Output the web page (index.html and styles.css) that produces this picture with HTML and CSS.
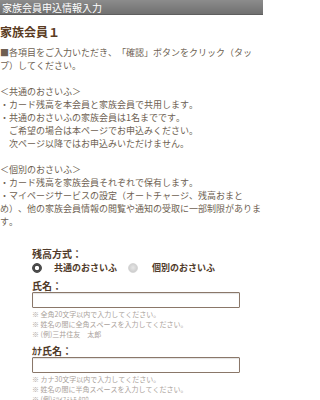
FILE: index.html
```html
<!DOCTYPE html>
<html lang="ja">
<head>
<meta charset="utf-8">
<title>家族会員申込情報入力</title>
<link rel="stylesheet" href="styles.css">
</head>
<body>
<div class="header">家族会員申込情報入力</div>
<h1 class="title">家族会員１</h1>
<p class="intro">■各項目をご入力いただき、「確認」ボタンをクリック（タップ）してください。<br><br>＜共通のおさいふ＞<br>・カード残高を本会員と家族会員で共用します。<br>・共通のおさいふの家族会員は1名までです。<br>　ご希望の場合は本ページでお申込みください。<br>　次ページ以降ではお申込みいただけません。<br><br>＜個別のおさいふ＞<br>・カード残高を家族会員それぞれで保有します。<br>・マイページサービスの設定（オートチャージ、残高おまとめ）、他の家族会員情報の閲覧や通知の受取に一部制限があります。</p>
<form class="form">
  <div class="label">残高方式：</div>
  <div class="radios">
    <label class="radio-item"><span class="radio checked"></span><span class="radio-text">共通のおさいふ</span></label>
    <label class="radio-item"><span class="radio"></span><span class="radio-text">個別のおさいふ</span></label>
  </div>
  <div class="field">
    <div class="label">氏名：</div>
    <input class="text-input" type="text">
    <ul class="notes">
      <li>※ 全角20文字以内で入力してください。</li>
      <li>※ 姓名の間に全角スペースを入力してください。</li>
      <li>※ (例)三井住友　太郎</li>
    </ul>
  </div>
  <div class="field">
    <div class="label">ｶﾅ氏名：</div>
    <input class="text-input" type="text">
    <ul class="notes">
      <li>※ カナ30文字以内で入力してください。</li>
      <li>※ 姓名の間に半角スペースを入力してください。</li>
      <li>※ (例)ﾐﾂｲｽﾐﾄﾓ ﾀﾛｳ</li>
    </ul>
  </div>
</form>
</body>
</html>
```

FILE: styles.css
```css
html, body {
  margin: 0;
  padding: 0;
  background: #ffffff;
}
body {
  font-family: "Noto Sans CJK JP", "Noto Sans", sans-serif;
  color: #6e5f52;
  width: 263px;
  overflow: hidden;
  text-spacing-trim: space-all;
  font-kerning: none;
}
.header {
  height: 15px;
  line-height: 15px;
  font-size: 10px;
  color: #ffffff;
  padding-left: 2px;
  background: linear-gradient(#8c8c8c, #707070);
  border-bottom: 1px solid #5e5e5e;
  box-sizing: border-box;
}
.title {
  margin: 9px 0 0 0;
  font-size: 12px;
  line-height: 16px;
  font-weight: bold;
  color: #5a3b22;
}
.intro {
  margin: 6px 0 0 0;
  font-size: 9px;
  line-height: 13px;
}
.form {
  margin: 20px 0 0 32px;
  display: flex;
  flex-direction: column;
}
.label {
  font-size: 10px;
  line-height: 12px;
  font-weight: bold;
  color: #4f3a2a;
}
.radios {
  display: flex;
  align-items: center;
  height: 12px;
  margin-top: 2px;
}
.radio-item {
  display: flex;
  align-items: center;
}
.radio {
  width: 10px;
  height: 10px;
  border-radius: 50%;
  box-sizing: border-box;
  background: radial-gradient(circle at 50% 45%, #e6e6e6 0, #d2d2d2 60%, #c4c4c4 100%);
  border: 1px solid #d6d6d6;
}
.radio.checked {
  background: radial-gradient(circle at 50% 50%, #ffffff 0, #ffffff 1.8px, #3d3d3d 2.6px, #555555 4px, #707070 100%);
  border: 1px solid #4a4a4a;
}
.radio-text {
  font-size: 9px;
  line-height: 12px;
  font-weight: bold;
  color: #4f3a2a;
  margin-left: 12px;
  margin-right: 11px;
}
.radio-item:last-child .radio-text {
  margin-left: 14px;
}
.field {
  display: flex;
  flex-direction: column;
  margin-top: 6px;
}
.text-input {
  width: 208px;
  height: 16px;
  box-sizing: border-box;
  margin: 0;
  padding: 0 3px;
  border: 1.5px solid #8a7769;
  border-radius: 1px;
  background: #ffffff;
  box-shadow: inset 0 1px 1px rgba(0, 0, 0, 0.12);
  font-size: 9px;
  outline: none;
}
.notes {
  list-style: none;
  margin: 1px 0 0 0;
  padding: 0;
  font-size: 7px;
  line-height: 10px;
  color: #aaa29b;
}
```
